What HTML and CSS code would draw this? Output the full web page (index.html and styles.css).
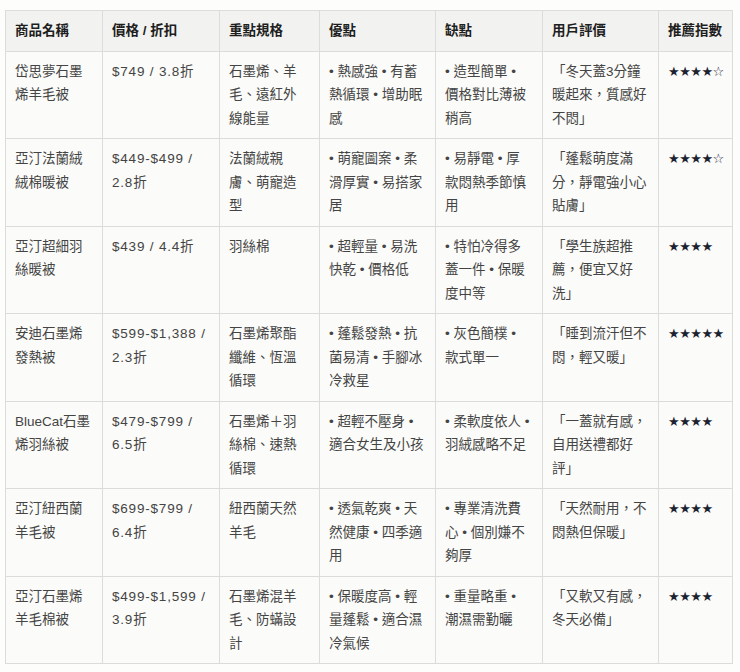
FILE: index.html
```html
<!DOCTYPE html>
<html lang="zh-Hant">
<head>
<meta charset="utf-8">
<link rel="stylesheet" href="styles.css">
</head>
<body>
<div class="wrap">
<table class="cmp">
<colgroup>
<col class="c1"><col class="c2"><col class="c3"><col class="c4"><col class="c5"><col class="c6"><col class="c7">
</colgroup>
<thead>
<tr><th>商品名稱</th><th>價格 / 折扣</th><th>重點規格</th><th>優點</th><th>缺點</th><th>用戶評價</th><th>推薦指數</th></tr>
</thead>
<tbody>
<tr><td>岱思夢石墨烯羊毛被</td><td class="pr">$749 / 3.8折</td><td>石墨烯、羊毛、遠紅外線能量</td><td>• 熱感強 • 有蓄熱循環 • 增助眠感</td><td>• 造型簡單 • 價格對比薄被稍高</td><td>「冬天蓋3分鐘暖起來，質感好不悶」</td><td class="stars">★★★★☆</td></tr>
<tr><td>亞汀法蘭絨絨棉暖被</td><td class="pr">$449-$499 / 2.8折</td><td>法蘭絨親膚、萌寵造型</td><td>• 萌寵圖案 • 柔滑厚實 • 易搭家居</td><td>• 易靜電 • 厚款悶熱季節慎用</td><td>「蓬鬆萌度滿分，靜電強小心貼膚」</td><td class="stars">★★★★☆</td></tr>
<tr><td>亞汀超細羽絲暖被</td><td class="pr">$439 / 4.4折</td><td>羽絲棉</td><td>• 超輕量 • 易洗快乾 • 價格低</td><td>• 特怕冷得多蓋一件 • 保暖度中等</td><td>「學生族超推薦，便宜又好洗」</td><td class="stars">★★★★</td></tr>
<tr><td>安迪石墨烯發熱被</td><td class="pr">$599-$1,388 / 2.3折</td><td>石墨烯聚酯纖維、恆溫循環</td><td>• 蓬鬆發熱 • 抗菌易清 • 手腳冰冷救星</td><td>• 灰色簡樸 • 款式單一</td><td>「睡到流汗但不悶，輕又暖」</td><td class="stars">★★★★★</td></tr>
<tr><td>BlueCat石墨烯羽絲被</td><td class="pr">$479-$799 / 6.5折</td><td>石墨烯＋羽絲棉、速熱循環</td><td>• 超輕不壓身 • 適合女生及小孩</td><td>• 柔軟度依人 • 羽絨感略不足</td><td>「一蓋就有感，自用送禮都好評」</td><td class="stars">★★★★</td></tr>
<tr><td>亞汀紐西蘭羊毛被</td><td class="pr">$699-$799 / 6.4折</td><td>紐西蘭天然羊毛</td><td>• 透氣乾爽 • 天然健康 • 四季適用</td><td>• 專業清洗費心 • 個別嫌不夠厚</td><td>「天然耐用，不悶熱但保暖」</td><td class="stars">★★★★</td></tr>
<tr><td>亞汀石墨烯羊毛棉被</td><td class="pr">$499-$1,599 / 3.9折</td><td>石墨烯混羊毛、防蟎設計</td><td>• 保暖度高 • 輕量蓬鬆 • 適合濕冷氣候</td><td>• 重量略重 • 潮濕需勤曬</td><td>「又軟又有感，冬天必備」</td><td class="stars">★★★★</td></tr>
</tbody>
</table>
</div>
</body>
</html>
```

FILE: styles.css
```css
html, body {
  margin: 0;
  padding: 0;
  background: #fdfdfc;
}
.wrap {
  padding: 10px 5px;
}
.cmp {
  border-collapse: collapse;
  table-layout: fixed;
  width: 727px;
  font-family: "Liberation Sans", "Noto Sans CJK TC", sans-serif;
  font-size: 13.5px;
  line-height: 23.5px;
  color: #444444;
  background: #fbfbf9;
}
.c1 { width: 97px; }
.c2 { width: 117px; }
.c3 { width: 100px; }
.c4 { width: 116px; }
.c5 { width: 107px; }
.c6 { width: 116px; }
.c7 { width: 74px; }
.cmp th,
.cmp td {
  border: 1px solid #dcdcdc;
  padding: 8px 10px 8px 9px;
  text-align: left;
  vertical-align: top;
}
.cmp th {
  background: #f2f2f0;
  color: #1e1e1e;
  font-weight: bold;
}
.cmp td.pr {
  letter-spacing: 0.8px;
}
.cmp td.stars {
  color: #1b2230;
  font-family: "DejaVu Sans", sans-serif;
  font-size: 13px;
  letter-spacing: -0.5px;
  white-space: nowrap;
}
```
